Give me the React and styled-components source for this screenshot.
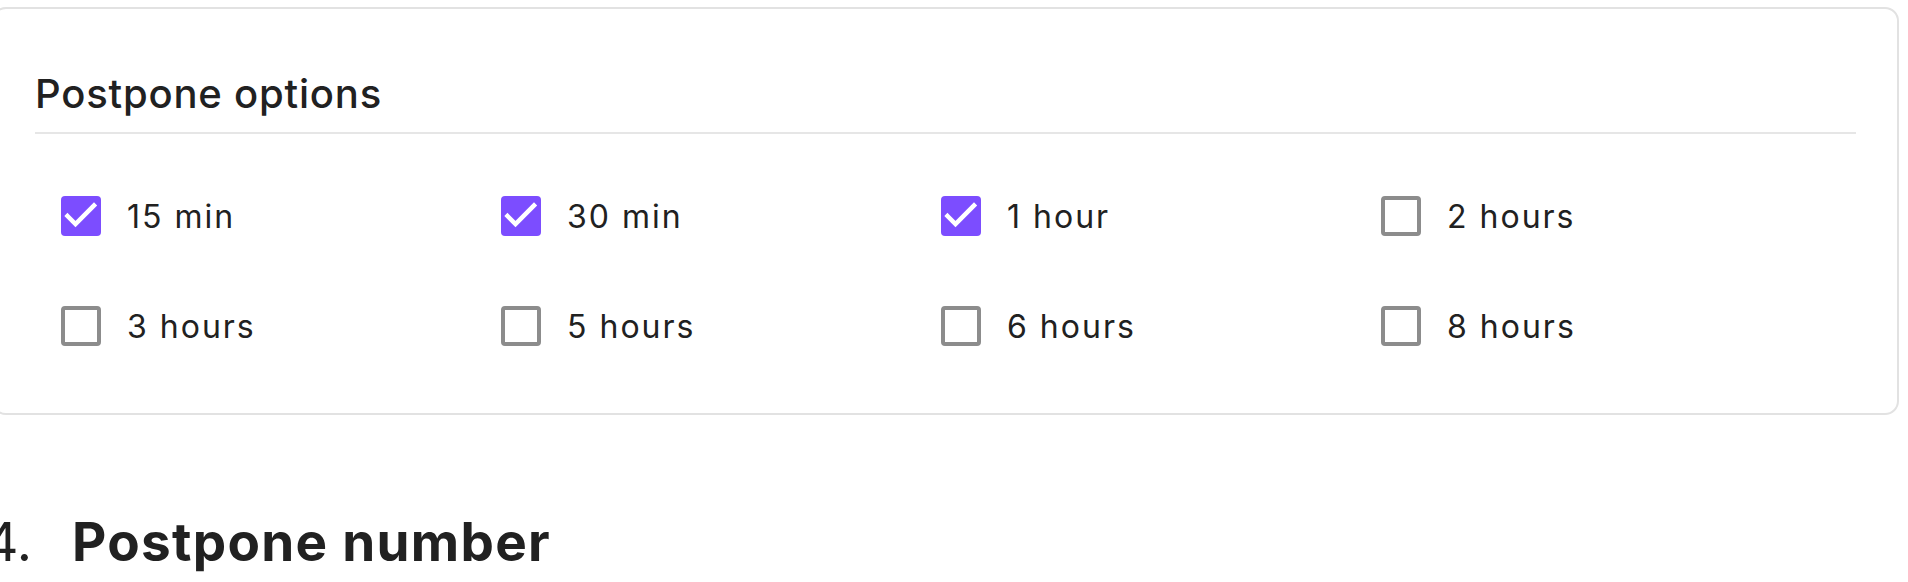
import React from "react";
import styled, { createGlobalStyle } from "styled-components";

const Global = createGlobalStyle`
  html, body { margin: 0; padding: 0; background: #ffffff; }
  body {
    font-family: Inter, "Noto Sans", "Liberation Sans", sans-serif;
    color: #212121;
    overflow: hidden;
  }
`;

const Page = styled.div`
  margin-left: -8px;
  padding: 7px 9px 0 0;
`;

const Card = styled.section`
  border: 2px solid #e2e2e2;
  border-radius: 14px;
  padding: 61px 41px 67px;
  background: #fff;
`;

const CardTitle = styled.h3`
  margin: 0;
  font-size: 40px;
  line-height: 48px;
  font-weight: 500;
  letter-spacing: 0.8px;
  padding-bottom: 14px;
  border-bottom: 2px solid #e6e6e6;
`;

const Options = styled.div`
  display: grid;
  grid-template-columns: repeat(4, 440px);
  row-gap: 70px;
  padding: 62px 0 0 26px;
`;

const Option = styled.label`
  display: flex;
  align-items: center;
  gap: 26px;
  height: 40px;
  font-size: 32px;
  letter-spacing: 2px;
  cursor: pointer;
`;

const Box = styled.span`
  box-sizing: border-box;
  width: 40px;
  height: 40px;
  flex: none;
  border-radius: 4px;
  display: flex;
  align-items: center;
  justify-content: center;
  background: ${(p) => (p.$checked ? "#7c4dff" : "#ffffff")};
  border: ${(p) => (p.$checked ? "none" : "4px solid #8c8c8c")};
`;

const Heading = styled.h2`
  display: flex;
  align-items: baseline;
  margin: 95px 0 0 -20px;
  font-size: 53px;
  line-height: 64px;
  font-weight: 700;
  letter-spacing: 1.3px;
`;

const Marker = styled.span`
  width: 60px;
  text-align: right;
  font-weight: 400;
  letter-spacing: 0;
  margin-right: 40px;
`;

const Check = () => (
  <svg width="40" height="40" viewBox="0 0 40 40" aria-hidden="true">
    <path
      d="M6.5 20 L14.5 28 L33 9.5"
      fill="none"
      stroke="#ffffff"
      strokeWidth="4.5"
      strokeLinecap="square"
    />
  </svg>
);

const options = [
  { label: "15 min", checked: true },
  { label: "30 min", checked: true },
  { label: "1 hour", checked: true },
  { label: "2 hours", checked: false },
  { label: "3 hours", checked: false },
  { label: "5 hours", checked: false },
  { label: "6 hours", checked: false },
  { label: "8 hours", checked: false },
];

export default function App() {
  return (
    <>
      <Global />
      <Page>
        <Card>
          <CardTitle>Postpone options</CardTitle>
          <Options>
            {options.map((o) => (
              <Option key={o.label}>
                <Box $checked={o.checked}>{o.checked && <Check />}</Box>
                {o.label}
              </Option>
            ))}
          </Options>
        </Card>
        <Heading>
          <Marker>4.</Marker>
          Postpone number
        </Heading>
      </Page>
    </>
  );
}
